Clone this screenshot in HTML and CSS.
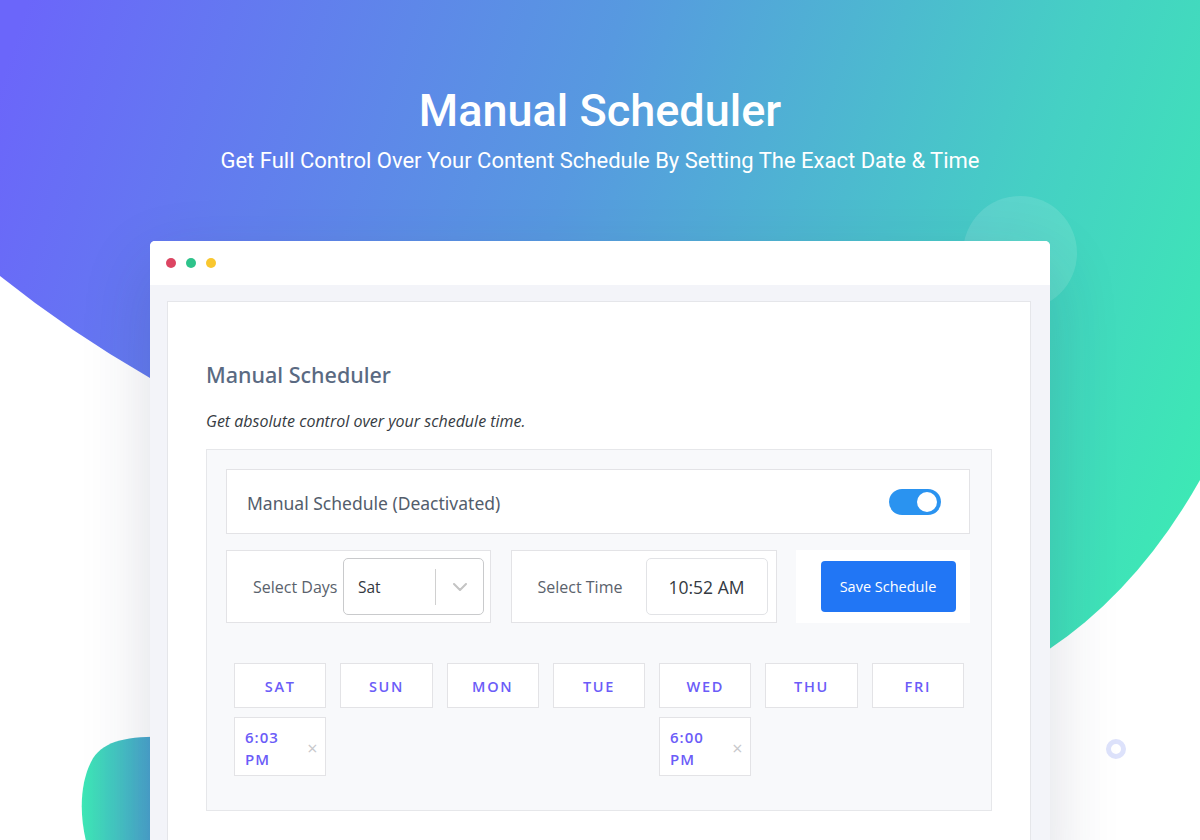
FILE: index.html
```html
<!DOCTYPE html>
<html lang="en">
<head>
<meta charset="utf-8">
<title>Manual Scheduler</title>
<link rel="stylesheet" href="styles.css">
</head>
<body>
<svg class="backdrop" width="1200" height="840" viewBox="0 0 1200 840" aria-hidden="true">
  <defs>
    <linearGradient id="heroGrad" gradientUnits="userSpaceOnUse" x1="0" y1="80" x2="1200" y2="480">
      <stop offset="0" stop-color="#6b66fa"/>
      <stop offset="0.45" stop-color="#5799e0"/>
      <stop offset="0.8" stop-color="#45d0c4"/>
      <stop offset="1" stop-color="#3de8b5"/>
    </linearGradient>
    <linearGradient id="blobGrad" gradientUnits="userSpaceOnUse" x1="80" y1="0" x2="155" y2="0">
      <stop offset="0" stop-color="#3de9b4"/>
      <stop offset="1" stop-color="#4b9fd0"/>
    </linearGradient>
  </defs>
  <path d="M0,0 H1200 V480 Q1138,590 1048,650 L150,378 Q70,332 0,276 Z" fill="url(#heroGrad)"/>
  <circle cx="1020" cy="253" r="57" fill="#ffffff" fill-opacity="0.12"/>
  <path d="M170,737 C128,736 102,740 91,762 C80,784 79,815 87,845 L170,845 Z" fill="url(#blobGrad)"/>
  <circle cx="1116" cy="749" r="7.5" fill="none" stroke="#dde2fb" stroke-width="5"/>
</svg>

<header class="hero">
  <h1 class="hero-title">Manual Scheduler</h1>
  <p class="hero-sub">Get Full Control Over Your Content Schedule By Setting The Exact Date &amp; Time</p>
</header>

<div class="window">
  <div class="win-bar">
    <span class="dot dot-red"></span>
    <span class="dot dot-green"></span>
    <span class="dot dot-yellow"></span>
  </div>
  <div class="win-body">
    <div class="card">
      <h2 class="card-title">Manual Scheduler</h2>
      <p class="card-lead">Get absolute control over your schedule time.</p>
      <div class="panel">
        <div class="status-row">
          <span class="status-text">Manual Schedule (Deactivated)</span>
          <span class="toggle"><span class="knob"></span></span>
        </div>
        <div class="controls">
          <div class="ctrl">
            <span class="ctrl-label">Select Days</span>
            <div class="select">
              <span class="select-value">Sat</span>
              <span class="select-sep"></span>
              <svg class="chev" width="14" height="8" viewBox="0 0 14 8"><path d="M1 1 L7 7 L13 1" fill="none" stroke="#c4c4c4" stroke-width="2" stroke-linecap="round" stroke-linejoin="round"/></svg>
            </div>
          </div>
          <div class="ctrl">
            <span class="ctrl-label">Select Time</span>
            <div class="time-input">10:52 AM</div>
          </div>
          <div class="ctrl ctrl-save">
            <button class="save-btn">Save Schedule</button>
          </div>
        </div>
        <div class="days">
          <div class="day-col">
            <div class="day">SAT</div>
            <div class="chip"><span class="chip-time">6:03 PM</span><span class="chip-x">×</span></div>
          </div>
          <div class="day-col"><div class="day">SUN</div></div>
          <div class="day-col"><div class="day">MON</div></div>
          <div class="day-col"><div class="day">TUE</div></div>
          <div class="day-col">
            <div class="day">WED</div>
            <div class="chip"><span class="chip-time">6:00 PM</span><span class="chip-x">×</span></div>
          </div>
          <div class="day-col"><div class="day">THU</div></div>
          <div class="day-col"><div class="day">FRI</div></div>
        </div>
      </div>
    </div>
  </div>
</div>
</body>
</html>
```

FILE: styles.css
```css
* { box-sizing: border-box; }

html, body {
  margin: 0;
  padding: 0;
}

body {
  position: relative;
  width: 1200px;
  height: 840px;
  overflow: hidden;
  background: #ffffff;
  font-family: "Open Sans", "Noto Sans", sans-serif;
}

.backdrop {
  position: absolute;
  top: 0;
  left: 0;
  z-index: 0;
}

.hero {
  position: relative;
  z-index: 1;
  padding-top: 84px;
  text-align: center;
  color: #ffffff;
  font-family: Roboto, "Liberation Sans", sans-serif;
}

.hero-title {
  margin: 0;
  font-size: 45px;
  line-height: 54px;
  font-weight: 500;
}

.hero-sub {
  margin: 9px 0 0;
  font-size: 22px;
  line-height: 28px;
  font-weight: 400;
}

.window {
  position: relative;
  z-index: 1;
  width: 900px;
  height: 640px;
  margin: 66px auto 0;
  border-radius: 5px 5px 0 0;
  background: #f3f4f9;
  box-shadow: 0 25px 70px rgba(40, 45, 80, 0.16);
  display: flex;
  flex-direction: column;
}

.win-bar {
  height: 44px;
  background: #ffffff;
  border-radius: 5px 5px 0 0;
  display: flex;
  align-items: center;
  gap: 10px;
  padding-left: 16px;
}

.dot {
  width: 10px;
  height: 10px;
  border-radius: 50%;
}
.dot-red { background: #dc4562; }
.dot-green { background: #2ec38b; }
.dot-yellow { background: #f9c72f; }

.win-body {
  flex: 1;
  padding: 16px 19px 0 17px;
  display: flex;
}

.card {
  flex: 1;
  background: #ffffff;
  border: 1px solid #e5e6ea;
  padding: 58px 38px 0;
}

.card-title {
  margin: 0;
  font-family: "Noto Sans", "Open Sans", sans-serif;
  font-size: 21.5px;
  line-height: 30px;
  font-weight: 500;
  color: #5a6a82;
}

.card-lead {
  margin: 21px 0 0;
  font-size: 16px;
  line-height: 21px;
  font-style: italic;
  color: #363b42;
}

.panel {
  margin-top: 17px;
  background: #f8f9fb;
  border: 1px solid #e6e7ea;
  padding: 19px 21px 34px 19px;
}

.status-row {
  height: 65px;
  background: #ffffff;
  border: 1px solid #e3e3e6;
  display: flex;
  align-items: center;
  justify-content: space-between;
  padding: 2px 28px 0 20px;
}

.status-text {
  font-family: "Noto Sans", "Open Sans", sans-serif;
  font-size: 17.5px;
  font-weight: 400;
  color: #535d6c;
}

.toggle {
  width: 52px;
  height: 26px;
  border-radius: 13px;
  background: #2a93f0;
  display: flex;
  align-items: center;
  justify-content: flex-end;
  padding-right: 4px;
  margin-top: -2px;
}

.knob {
  width: 20px;
  height: 20px;
  border-radius: 50%;
  background: #ffffff;
}

.controls {
  margin-top: 16px;
  display: grid;
  grid-template-columns: 265px 266px 1fr;
  column-gap: 19.5px;
}

.ctrl {
  height: 73px;
  background: #ffffff;
  border: 1px solid #e3e3e6;
  display: flex;
  align-items: center;
  justify-content: space-between;
  padding: 0 6px 0 26px;
}

.ctrl-label {
  font-size: 16px;
  color: #5a626c;
}

.ctrl + .ctrl {
  padding-right: 8px;
}

.select {
  width: 141px;
  height: 57px;
  border: 1px solid #c9cacc;
  border-radius: 5px;
  display: flex;
  align-items: center;
  padding-left: 14px;
}

.select-value {
  flex: 1;
  font-size: 15.5px;
  color: #333840;
}

.select-sep {
  width: 1px;
  height: 36px;
  background: #d0d0d0;
}

.chev {
  margin: 0 16px 0 17px;
}

.time-input {
  width: 122px;
  height: 57px;
  border: 1px solid #e2e3e6;
  border-radius: 5px;
  display: flex;
  align-items: center;
  justify-content: center;
  font-size: 17.5px;
  color: #343a42;
}

.ctrl-save {
  border-color: #ffffff;
  justify-content: center;
  padding: 0 0 0 18px;
}

.save-btn {
  width: 135px;
  height: 51px;
  border: none;
  border-radius: 4px;
  background: #2176f5;
  color: #ffffff;
  font-family: "Open Sans", "Noto Sans", sans-serif;
  font-size: 14.5px;
}

.days {
  margin-top: 40px;
  padding: 0 6px 0 8px;
  display: grid;
  grid-template-columns: repeat(7, 1fr);
  column-gap: 13.8px;
  align-items: start;
}

.day-col {
  display: flex;
  flex-direction: column;
  gap: 9px;
}

.day {
  height: 45px;
  padding-top: 2px;
  background: #ffffff;
  border: 1px solid #e3e3e6;
  display: flex;
  align-items: center;
  justify-content: center;
  font-size: 14.5px;
  font-weight: 600;
  letter-spacing: 1.7px;
  color: #6b5cf8;
}

.chip {
  height: 59px;
  background: #ffffff;
  border: 1px solid #e3e3e6;
  display: flex;
  align-items: center;
  justify-content: space-between;
  padding: 3px 8px 0 10px;
}

.chip-time {
  width: 50px;
  font-size: 15px;
  line-height: 22px;
  font-weight: 600;
  letter-spacing: 1px;
  color: #6b5cf8;
}

.chip-x {
  font-size: 18px;
  color: #c8c8cc;
  line-height: 1;
}
```
